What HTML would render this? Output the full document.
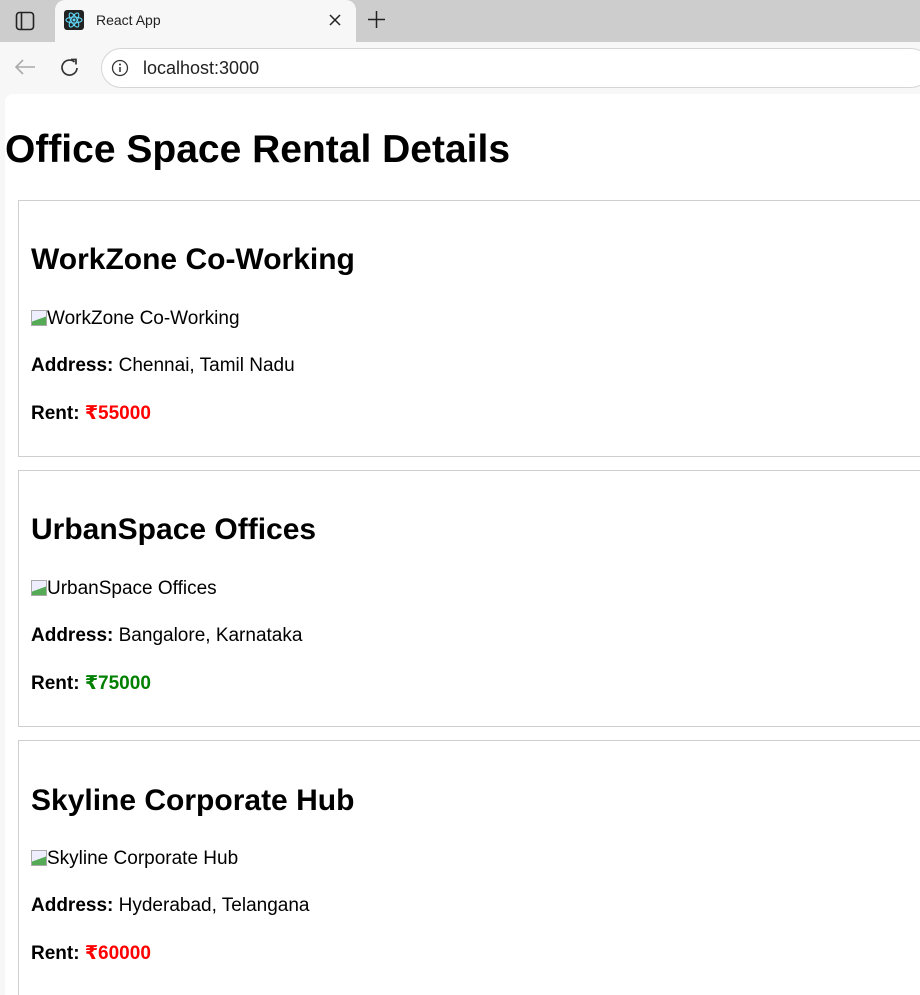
<!DOCTYPE html>
<html><head><meta charset="utf-8"><style>
*{margin:0;padding:0;box-sizing:border-box}
html,body{width:920px;height:995px;overflow:hidden}
body{background:#f7f7f7;font-family:"Liberation Sans","DejaVu Sans",sans-serif;position:relative}
.tabbar{position:absolute;left:0;top:0;width:920px;height:42px;background:#cdcdcd}
.tab{position:absolute;left:55px;top:0;width:301px;height:42px;background:#f7f7f7;border-radius:10px 10px 0 0}
.page{position:absolute;left:5px;top:94px;width:915px;height:901px;background:#fff;border-radius:8px 0 0 0}
.a{position:absolute;white-space:nowrap;color:#000}
.h1{font-size:39px;font-weight:bold}
.h2{font-size:30px;font-weight:bold}
.p{font-size:19px}
.card{position:absolute;left:18px;width:902px;height:257px;border:1px solid #cfcfcf;border-right:none}
.ic{display:inline-block;width:16px;height:16px;border:1px solid #aaa;background:linear-gradient(160deg,#eef 55%,#5a5 56%);vertical-align:-2px;margin-right:0}
</style></head><body>
<div class="tabbar"></div>
<div class="tab"></div>
<svg class="a" style="left:15px;top:11px" width="20" height="20" viewBox="0 0 20 20"><rect x="1.5" y="1.5" width="17" height="17" rx="3" fill="none" stroke="#222" stroke-width="1.6"/><line x1="6.5" y1="1.5" x2="6.5" y2="18.5" stroke="#222" stroke-width="1.6"/></svg>
<svg class="a" style="left:64px;top:10px" width="20" height="20" viewBox="0 0 20 20"><rect width="20" height="20" rx="3" fill="#222"/><g fill="none" stroke="#61dafb" stroke-width="1.1"><ellipse cx="10" cy="10" rx="8" ry="3"/><ellipse cx="10" cy="10" rx="8" ry="3" transform="rotate(60 10 10)"/><ellipse cx="10" cy="10" rx="8" ry="3" transform="rotate(120 10 10)"/></g><circle cx="10" cy="10" r="1.5" fill="#61dafb"/></svg>
<div class="a" style="left:96px;top:12px;font-size:14px;color:#222">React App</div>
<svg class="a" style="left:329px;top:14px" width="12" height="12" viewBox="0 0 12 12"><path d="M1 1L11 11M11 1L1 11" stroke="#222" stroke-width="1.5"/></svg>
<svg class="a" style="left:367px;top:10px" width="19" height="19" viewBox="0 0 19 19"><path d="M9.5 1V18M1 9.5H18" stroke="#222" stroke-width="1.5"/></svg>
<svg class="a" style="left:13px;top:57px" width="24" height="20" viewBox="0 0 24 20"><path d="M22 10H3M10 3L3 10L10 17" fill="none" stroke="#aaa" stroke-width="1.6"/></svg>
<svg class="a" style="left:59px;top:57px" width="22" height="22" viewBox="0 0 22 22"><path d="M18 11A7.5 7.5 0 1 1 15.5 5" fill="none" stroke="#333" stroke-width="1.7"/><path d="M12 2.5H17V7.5" fill="none" stroke="#333" stroke-width="1.7"/></svg>
<div class="a" style="left:101px;top:48px;width:830px;height:40px;border:1px solid #d5d5d5;border-radius:20px;background:#fff"></div>
<svg class="a" style="left:111px;top:59px" width="18" height="18" viewBox="0 0 18 18"><circle cx="9" cy="9" r="7.5" fill="none" stroke="#333" stroke-width="1.3"/><line x1="9" y1="8" x2="9" y2="13" stroke="#333" stroke-width="1.5"/><circle cx="9" cy="5.5" r="1" fill="#333"/></svg>
<div class="a" style="left:143px;top:58px;font-size:18px;color:#222">localhost:3000</div>
<div class="page"></div>
<div class="a h1" style="left:5px;top:128px">Office Space Rental Details</div>

<div class="card" style="top:200px"></div>
<div class="a h2" style="left:31px;top:243px">WorkZone Co-Working</div>
<div class="a p" style="left:31px;top:308px"><span class="ic"></span>WorkZone Co-Working</div>
<div class="a p" style="left:31px;top:355px"><b>Address:</b> Chennai, Tamil Nadu</div>
<div class="a p" style="left:31px;top:402px"><b>Rent: <span style="color:#f00">₹55000</span></b></div>

<div class="card" style="top:470px"></div>
<div class="a h2" style="left:31px;top:513px">UrbanSpace Offices</div>
<div class="a p" style="left:31px;top:578px"><span class="ic"></span>UrbanSpace Offices</div>
<div class="a p" style="left:31px;top:625px"><b>Address:</b> Bangalore, Karnataka</div>
<div class="a p" style="left:31px;top:672px"><b>Rent: <span style="color:#008000">₹75000</span></b></div>

<div class="card" style="top:740px;height:255px;border-bottom:none"></div>
<div class="a h2" style="left:31px;top:784px">Skyline Corporate Hub</div>
<div class="a p" style="left:31px;top:848px"><span class="ic"></span>Skyline Corporate Hub</div>
<div class="a p" style="left:31px;top:895px"><b>Address:</b> Hyderabad, Telangana</div>
<div class="a p" style="left:31px;top:942px"><b>Rent: <span style="color:#f00">₹60000</span></b></div>
</body></html>
